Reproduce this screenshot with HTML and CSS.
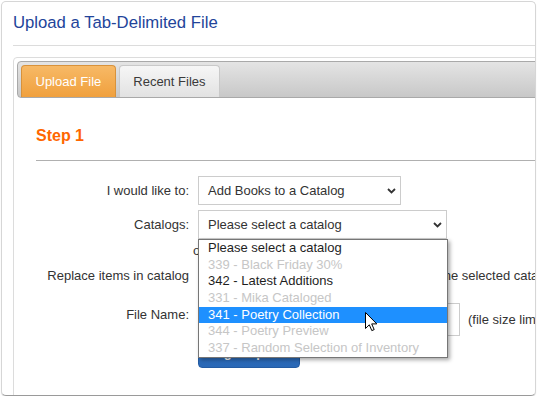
FILE: index.html
```html
<!DOCTYPE html>
<html lang="en">
<head>
<meta charset="utf-8">
<title>Upload a Tab-Delimited File</title>
<link rel="stylesheet" href="styles.css">
</head>
<body>
<div class="page">
  <div class="card">
    <div class="card-inner">
      <h1 class="title">Upload a Tab-Delimited File</h1>
      <div class="rule"></div>
      <div class="tabs">
        <div class="tabbar">
          <div class="tab tab-active">Upload File</div>
          <div class="tab tab-idle">Recent Files</div>
        </div>
        <div class="panel">
          <h2 class="step">Step 1</h2>
          <div class="step-rule"></div>
          <div class="form">
            <div class="row">
              <label class="lbl">I would like to:</label>
              <div class="select select-action">
                <span>Add Books to a Catalog</span>
                <svg class="chev" width="9" height="6" viewBox="0 0 9 6"><path d="M1 1 L4.5 4.5 L8 1" fill="none" stroke="#333" stroke-width="1.8"/></svg>
              </div>
            </div>
            <div class="row row-catalogs">
              <label class="lbl">Catalogs:</label>
              <div class="select select-catalog">
                <span>Please select a catalog</span>
                <svg class="chev" width="9" height="6" viewBox="0 0 9 6"><path d="M1 1 L4.5 4.5 L8 1" fill="none" stroke="#333" stroke-width="1.8"/></svg>
                <div class="dropdown">
                  <div class="opt">Please select a catalog</div>
                  <div class="opt dis">339 - Black Friday 30%</div>
                  <div class="opt">342 - Latest Additions</div>
                  <div class="opt dis">331 - Mika Cataloged</div>
                  <div class="opt hl">341 - Poetry Collection</div>
                  <div class="opt dis">344 - Poetry Preview</div>
                  <div class="opt dis">337 - Random Selection of Inventory</div>
                </div>
              </div>
            </div>
            <div class="note">or create a new catalog</div>
            <div class="row row-replace">
              <label class="lbl">Replace items in catalog</label>
              <div class="field"><input type="checkbox" class="check"><span>Delete all the existing items currently in the selected catalog</span></div>
            </div>
            <div class="row row-file">
              <label class="lbl lbl-top">File Name:</label>
              <div class="filebox"></div>
              <span class="hint">(file size limit: 10 MB)</span>
            </div>
            <div class="row row-btn">
              <button class="btn">Begin Upload</button>
            </div>
          </div>
        </div>
      </div>
    </div>
  </div>
  <svg class="cursor" width="13" height="20" viewBox="0 0 13 20"><path d="M0.5 0.5 L0.5 16.5 L4.3 12.8 L6.8 18.6 L9.2 17.6 L6.7 11.9 L11.8 11.9 Z" fill="#fff" stroke="#000" stroke-width="1" stroke-linejoin="miter"/></svg>
</div>
</body>
</html>
```

FILE: styles.css
```css
html, body {
  margin: 0;
  padding: 0;
  background: #fff;
}

body {
  font-family: "Liberation Sans", Arial, sans-serif;
  font-size: 13px;
  color: #333;
}

.page {
  position: relative;
  padding: 1px 0 0 1px;
}

.card {
  width: 535px;
  height: 395px;
  box-sizing: border-box;
  border: 1px solid #d6d6d6;
  border-bottom-color: #9a9a9a;
  border-radius: 5px;
  overflow: hidden;
  background: #fff;
  box-shadow: 0 1px 1px rgba(0, 0, 0, 0.15);
}

.card-inner {
  width: 760px;
  padding: 11px 0 0 11px;
}

.title {
  margin: 0;
  font-size: 16.7px;
  font-weight: normal;
  line-height: 19px;
  color: #22449a;
}

.rule {
  height: 1px;
  background: #dcdcdc;
  margin-top: 13px;
}

.tabs {
  margin-top: 11px;
  border: 1px solid #dcdcdc;
  border-radius: 4px;
  padding: 3px;
  height: 600px;
}

.tabbar {
  display: flex;
  gap: 3px;
  padding: 3px 3px 0;
  border: 1px solid #a9a9a9;
  border-radius: 4px;
  background: linear-gradient(#e4e4e4, #c8c8c8);
}

.tab {
  height: 31px;
  line-height: 31px;
  padding: 0 13.5px;
  border: 1px solid;
  border-bottom: 0;
  border-radius: 4px 4px 0 0;
  font-size: 13px;
}

.tab-active {
  color: #fff;
  background: linear-gradient(#f7b966, #f0a03d);
  border-color: #d8923b;
}

.tab-idle {
  color: #3a3a3a;
  background: linear-gradient(#f6f6f6, #e2e2e2);
  border-color: #c9c9c9;
}

.panel {
  padding: 29px 0 0 19px;
}

.step {
  margin: 0;
  font-size: 16px;
  line-height: 18px;
  font-weight: bold;
  color: #ff6600;
}

.step-rule {
  height: 1px;
  background: #b0b0b0;
  margin-top: 15px;
}

.form {
  margin-top: 15px;
}

.row {
  display: flex;
  align-items: center;
}

.lbl {
  flex: none;
  width: 153px;
  margin-right: 9px;
  text-align: right;
  line-height: 15px;
  color: #333;
}

.select {
  position: relative;
  box-sizing: border-box;
  height: 29px;
  display: flex;
  align-items: center;
  justify-content: space-between;
  padding: 0 4px 0 9px;
  border: 1px solid #cccccc;
  background: #fff;
  color: #333;
}

.select-action {
  width: 203px;
}

.select-catalog {
  width: 249px;
}

.row-catalogs {
  margin-top: 5px;
}

.chev {
  flex: none;
}

.dropdown {
  position: absolute;
  top: calc(100% + 1px);
  left: -1px;
  width: 250px;
  box-sizing: border-box;
  border: 1px solid #767676;
  background: #fff;
  box-shadow: 2px 2px 4px rgba(0, 0, 0, 0.35);
  z-index: 5;
}

.opt {
  height: 16.67px;
  line-height: 16.67px;
  padding-left: 9px;
  color: #1e1e1e;
  white-space: nowrap;
}

.opt.dis {
  color: #c6c6c6;
}

.opt.hl {
  background: #1e90ff;
  color: #fff;
}

.note {
  margin-top: 4px;
  padding-left: 157px;
  line-height: 15px;
}

.row-replace {
  margin-top: 10px;
  line-height: 15px;
}

.field {
  display: flex;
  align-items: center;
  white-space: nowrap;
}

.check {
  width: 13px;
  height: 13px;
  margin: 0;
}

.row-file {
  margin-top: 20px;
  align-items: flex-start;
}

.lbl-top {
  margin-top: 4px;
}

.filebox {
  flex: none;
  box-sizing: border-box;
  width: 262px;
  height: 33px;
  border: 1px solid #cccccc;
  background: #fff;
}

.hint {
  align-self: center;
  margin-left: 8px;
  white-space: nowrap;
  line-height: 15px;
}

.row-btn {
  margin-top: 6px;
  padding-left: 162px;
}

.btn {
  width: 102px;
  height: 26px;
  box-sizing: border-box;
  border: 1px solid #245ca3;
  border-radius: 4px;
  background: linear-gradient(#3276c6, #2a68b6);
  color: #fff;
  font-family: "Liberation Sans", Arial, sans-serif;
  font-size: 13px;
  font-weight: bold;
  padding: 0 0 6px;
}

.cursor {
  position: absolute;
  left: 365px;
  top: 312px;
  z-index: 10;
}
```
